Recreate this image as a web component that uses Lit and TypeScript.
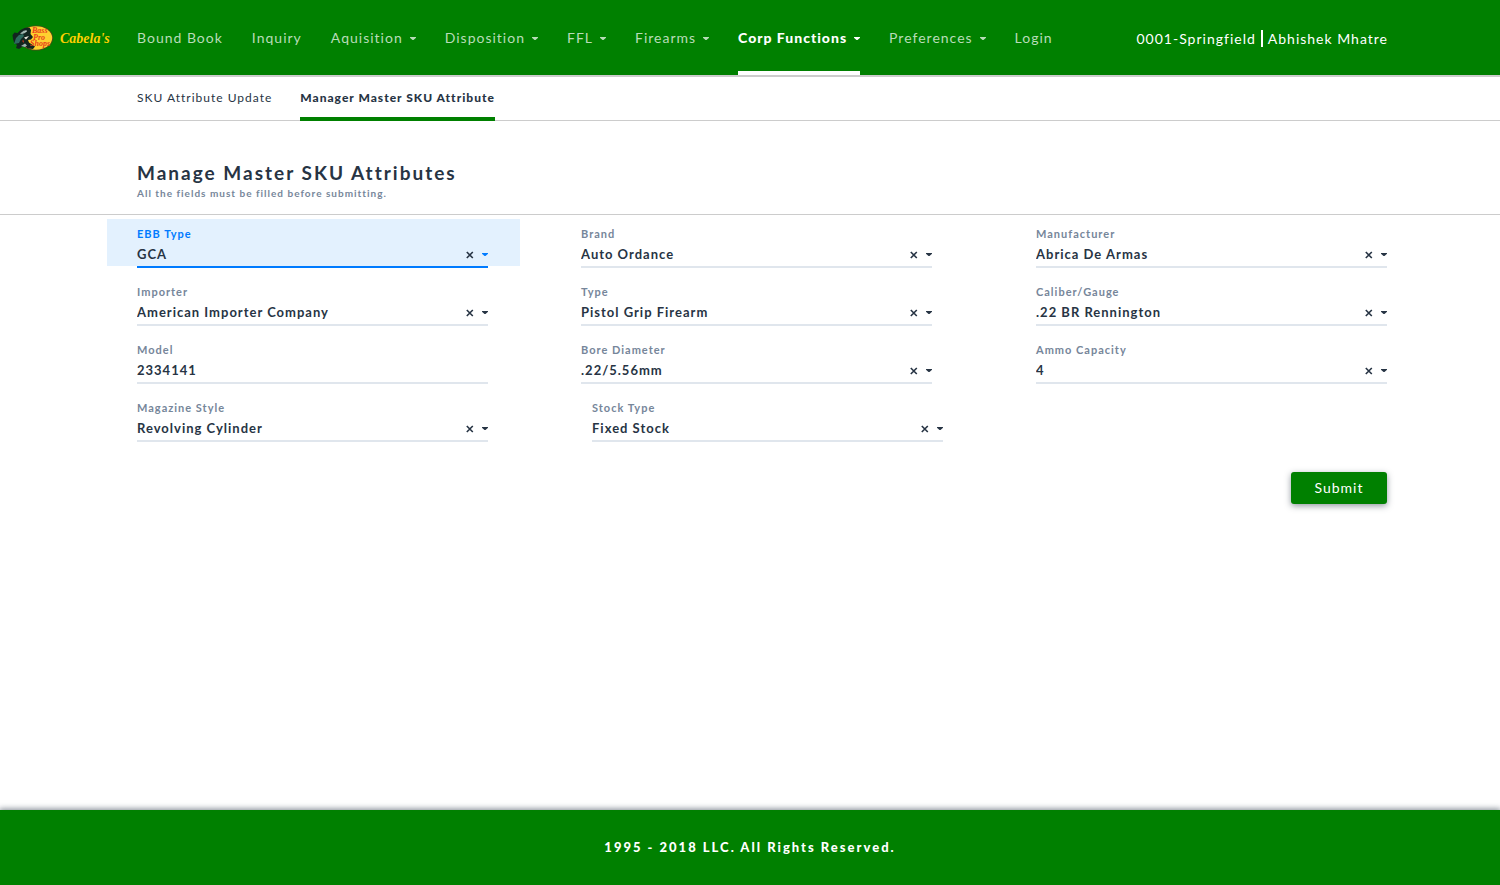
import { LitElement, html, css, svg, nothing } from "lit";
import { customElement, property } from "lit/decorators.js";
import { classMap } from "lit/directives/class-map.js";

interface NavEntry {
  label: string;
  menu?: boolean;
  active?: boolean;
}

interface FieldEntry {
  id: string;
  label: string;
  value: string;
  kind?: "text" | "select";
  active?: boolean;
}

const NAV: NavEntry[] = [
  { label: "Bound Book" },
  { label: "Inquiry" },
  { label: "Aquisition", menu: true },
  { label: "Disposition", menu: true },
  { label: "FFL", menu: true },
  { label: "Firearms", menu: true },
  { label: "Corp Functions", menu: true, active: true },
  { label: "Preferences", menu: true },
  { label: "Login" },
];

const ROWS: FieldEntry[][] = [
  [
    { id: "ebb", label: "EBB Type", value: "GCA", active: true },
    { id: "brand", label: "Brand", value: "Auto Ordance" },
    { id: "manufacturer", label: "Manufacturer", value: "Abrica De Armas" },
  ],
  [
    { id: "importer", label: "Importer", value: "American Importer Company" },
    { id: "type", label: "Type", value: "Pistol Grip Firearm" },
    { id: "caliber", label: "Caliber/Gauge", value: ".22 BR Rennington" },
  ],
  [
    { id: "model", label: "Model", value: "2334141", kind: "text" },
    { id: "bore", label: "Bore Diameter", value: ".22/5.56mm" },
    { id: "ammo", label: "Ammo Capacity", value: "4" },
  ],
  [
    { id: "magazine", label: "Magazine Style", value: "Revolving Cylinder" },
    { id: "stock", label: "Stock Type", value: "Fixed Stock" },
  ],
];

const caret = html`<svg class="caret" width="6" height="4" viewBox="0 0 6 4" aria-hidden="true">
  <path d="M0 0h6v.8L3.5 3h-1L0 .8z" fill="currentColor" />
</svg>`;

@customElement("brand-logo")
export class BrandLogo extends LitElement {
  static styles = css`
    :host {
      display: block;
      letter-spacing: 0;
    }
    svg {
      display: block;
    }
    .shops {
      font: italic 700 8px "Liberation Serif", serif;
      fill: #e8401c;
    }
    .script {
      font: italic 700 14px "Liberation Serif", serif;
      fill: #ffd000;
    }
  `;

  render() {
    return html`<svg width="104" height="28" viewBox="0 0 104 28" role="img" aria-label="Bass Pro Shops and Cabela's">
      ${svg`
        <ellipse cx="24" cy="14" rx="17" ry="12.6" fill="#4a4a18" />
        <ellipse cx="24" cy="14" rx="16.2" ry="11.8" fill="#fed02f" />
        <path d="M.5 11l2-2.500 3 .5 3-3 4-2 5-.5 1.500 2.500-.5 4 2.500 3-2 2.500-3 .5 1 2.500 3 2 3 2-2 2.500-5-.5-3-2-3 .5-3 2-3-1 1-3-3-2.500-1-3.500z" fill="#12251f" />
        <path d="M2 20l2-6 3-3 4-1 1 2-3 3-2 4z" fill="#2c6a5e" />
        <path d="M8 9.500l4-3 3 .5-2 2-3 1zM9 22l4-2.500 2 2-2 1.500z" fill="#9fb6b0" />
        <path d="M12 13.500l5-1.500-3 3.500z" fill="#e9e9df" />
        <path d="M10 16.500l2 0-.5 2.500z" fill="#c8351c" />
        <circle cx="14" cy="7" r=".7" fill="#e4efe9" />
        <text class="shops" x="20" y="9">Bass</text>
        <text class="shops" x="21" y="16">Pro</text>
        <text class="shops" x="18" y="22">Shops</text>
        <text class="script" x="48" y="19">Cabela's</text>
      `}
    </svg>`;
  }
}

@customElement("form-field")
export class FormField extends LitElement {
  @property({ attribute: false }) field!: FieldEntry;

  static styles = css`
    :host {
      display: block;
      position: relative;
      color: #273444;
    }
    .field {
      padding-top: 8px;
    }
    .active::before {
      content: "";
      position: absolute;
      inset: 0 -32px 2px -30px;
      background: #e3f1fe;
    }
    label {
      display: block;
      position: relative;
      font-size: 11px;
      font-weight: 700;
      line-height: 14px;
      color: #76869a;
    }
    .control {
      position: relative;
      display: grid;
      grid-template-columns: minmax(0, 1fr) auto auto;
      align-items: center;
      height: 25px;
      border-bottom: 2px solid #e0e6ed;
    }
    .value {
      grid-column: 1 / -1;
      grid-row: 1;
      appearance: none;
      width: 100%;
      height: 25px;
      margin: 0;
      padding: 0 0 1px;
      border: 0;
      border-radius: 0;
      outline: 0;
      background: none;
      font: inherit;
      font-size: 13px;
      font-weight: 700;
      line-height: 24px;
      letter-spacing: 1px;
      color: inherit;
    }
    select.value {
      padding: 1px 0 0;
    }
    .clear {
      grid-column: 2;
      grid-row: 1;
      z-index: 1;
      display: block;
      padding: 2px 0 0;
      margin-right: 8px;
      border: 0;
      background: none;
      color: inherit;
      cursor: pointer;
    }
    .clear svg {
      display: block;
    }
    .caret {
      grid-column: 3;
      grid-row: 1;
      z-index: 1;
      margin-top: 2px;
      pointer-events: none;
    }
    .active label,
    .active .caret {
      color: #007bff;
    }
    .active .control {
      border-color: #007bff;
    }
  `;

  render() {
    const { id, label, value, kind, active } = this.field;
    return html`<div class=${classMap({ field: true, active: !!active })}>
      <label for=${id}>${label}</label>
      <div class="control">
        ${kind === "text"
          ? html`<input class="value" id=${id} type="text" .value=${value} />`
          : html`<select class="value" id=${id}>
                <option>${value}</option>
              </select>
              <button class="clear" type="button" aria-label="Clear ${label}">
                <svg width="8" height="8" viewBox="0 0 8 8" aria-hidden="true">
                  <path d="M.8 1l6 6M6.800 1l-6 6" stroke="currentColor" stroke-width="1.6" />
                </svg>
              </button>
              ${caret}`}
      </div>
    </div>`;
  }
}

@customElement("app-root")
export class AppRoot extends LitElement {
  static styles = css`
    :host {
      display: flex;
      flex-direction: column;
      min-height: 100vh;
      background: #fff;
      color: #273444;
      font-family: Lato, "Open Sans", sans-serif;
      letter-spacing: 1px;
    }
    a {
      color: inherit;
      text-decoration: none;
    }
    .top {
      display: flex;
      height: 75px;
      padding: 0 112px 0 12px;
      border-bottom: 2px solid #ccc;
      background: #008000;
      color: #fff;
      font-size: 14px;
      line-height: 20px;
      white-space: nowrap;
    }
    brand-logo {
      align-self: center;
      flex: none;
      width: 125px;
    }
    .nav {
      display: flex;
      gap: 29px;
    }
    .nav a {
      display: flex;
      align-items: center;
      gap: 7px;
      border-bottom: 4px solid transparent;
      border-top: 4px solid transparent;
      color: #b8dcb8;
    }
    .nav .current {
      border-bottom-color: #fff;
      color: #fff;
      font-weight: 900;
    }
    .nav .caret {
      margin-top: 3px;
    }
    .user {
      display: flex;
      align-items: center;
      gap: 5px;
      margin-left: auto;
      padding-top: 2px;
    }
    .divider {
      width: 2px;
      height: 17px;
      background: #fff;
    }
    .tabs {
      display: flex;
      gap: 28px;
      height: 43px;
      padding-left: 137px;
      border-bottom: 1px solid #ccc;
      font-size: 12px;
      line-height: 42px;
    }
    .tabs .current {
      height: 40px;
      border-bottom: 4px solid #008000;
      font-weight: 900;
    }
    .heading {
      padding: 38px 137px 14px;
      border-bottom: 1px solid #ccc;
    }
    h1 {
      margin: 0;
      font-size: 19px;
      font-weight: 700;
      line-height: 27px;
      letter-spacing: 2px;
    }
    .heading p {
      margin: 0;
      color: #76869a;
      font-size: 10px;
      font-weight: 700;
      line-height: 14px;
    }
    form {
      display: flex;
      flex-direction: column;
      gap: 9px;
      padding: 4px 113px 40px 137px;
    }
    .row {
      display: flex;
      gap: 93px;
    }
    .row form-field {
      flex: none;
      width: calc((100% - 197px) / 3);
    }
    .row form-field:nth-child(3) {
      margin-left: 11px;
    }
    .row.pair {
      gap: 104px;
    }
    .submit {
      align-self: flex-end;
      width: 96px;
      height: 32px;
      margin-top: 21px;
      padding: 0 0 2px;
      border: 0;
      border-radius: 3px;
      background: #008000;
      box-shadow: 0 2px 6px rgba(39, 52, 68, 0.5);
      color: #fff;
      font: inherit;
      font-size: 14px;
      letter-spacing: inherit;
    }
    footer {
      margin-top: auto;
      background: #008000;
      box-shadow: 0 0 6px 1px rgba(39, 52, 68, 0.6);
      color: #fff;
      font-size: 13px;
      font-weight: 900;
      letter-spacing: 2px;
      line-height: 75px;
      text-align: center;
    }
  `;

  render() {
    return html`
      <header class="top">
        <brand-logo></brand-logo>
        <nav class="nav" aria-label="Main">
          ${NAV.map(
            (item) => html`<a href="#" class=${classMap({ current: !!item.active })}
              ><span>${item.label}</span>${item.menu ? caret : nothing}</a
            >`
          )}
        </nav>
        <div class="user">
          <span>0001-Springfield</span>
          <span class="divider"></span>
          <span>Abhishek Mhatre</span>
        </div>
      </header>
      <nav class="tabs" aria-label="Corp Functions">
        <a href="#">SKU Attribute Update</a>
        <a href="#" class="current" aria-current="page">Manager Master SKU Attribute</a>
      </nav>
      <main>
        <div class="heading">
          <h1>Manage Master SKU Attributes</h1>
          <p>All the fields must be filled before submitting.</p>
        </div>
        <form>
          ${ROWS.map(
            (row) => html`<div class=${classMap({ row: true, pair: row.length === 2 })}>
              ${row.map((field) => html`<form-field .field=${field}></form-field>`)}
            </div>`
          )}
          <button class="submit" type="button">Submit</button>
        </form>
      </main>
      <footer>1995 - 2018 LLC. All Rights Reserved.</footer>
    `;
  }
}
